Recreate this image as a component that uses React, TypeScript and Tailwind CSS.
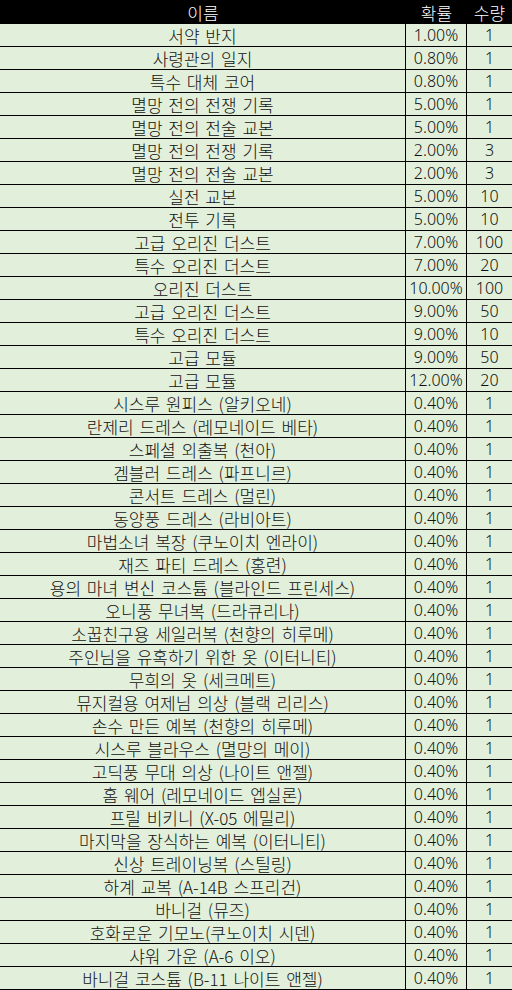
const rows: [string, string, string][] = [
  ["서약 반지", "1.00%", "1"],
  ["사령관의 일지", "0.80%", "1"],
  ["특수 대체 코어", "0.80%", "1"],
  ["멸망 전의 전쟁 기록", "5.00%", "1"],
  ["멸망 전의 전술 교본", "5.00%", "1"],
  ["멸망 전의 전쟁 기록", "2.00%", "3"],
  ["멸망 전의 전술 교본", "2.00%", "3"],
  ["실전 교본", "5.00%", "10"],
  ["전투 기록", "5.00%", "10"],
  ["고급 오리진 더스트", "7.00%", "100"],
  ["특수 오리진 더스트", "7.00%", "20"],
  ["오리진 더스트", "10.00%", "100"],
  ["고급 오리진 더스트", "9.00%", "50"],
  ["특수 오리진 더스트", "9.00%", "10"],
  ["고급 모듈", "9.00%", "50"],
  ["고급 모듈", "12.00%", "20"],
  ["시스루 원피스 (알키오네)", "0.40%", "1"],
  ["란제리 드레스 (레모네이드 베타)", "0.40%", "1"],
  ["스페셜 외출복 (천아)", "0.40%", "1"],
  ["겜블러 드레스 (파프니르)", "0.40%", "1"],
  ["콘서트 드레스 (멀린)", "0.40%", "1"],
  ["동양풍 드레스 (라비아트)", "0.40%", "1"],
  ["마법소녀 복장 (쿠노이치 엔라이)", "0.40%", "1"],
  ["재즈 파티 드레스 (홍련)", "0.40%", "1"],
  ["용의 마녀 변신 코스튬 (블라인드 프린세스)", "0.40%", "1"],
  ["오니풍 무녀복 (드라큐리나)", "0.40%", "1"],
  ["소꿉친구용 세일러복 (천향의 히루메)", "0.40%", "1"],
  ["주인님을 유혹하기 위한 옷 (이터니티)", "0.40%", "1"],
  ["무희의 옷 (세크메트)", "0.40%", "1"],
  ["뮤지컬용 여제님 의상 (블랙 리리스)", "0.40%", "1"],
  ["손수 만든 예복 (천향의 히루메)", "0.40%", "1"],
  ["시스루 블라우스 (멸망의 메이)", "0.40%", "1"],
  ["고딕풍 무대 의상 (나이트 앤젤)", "0.40%", "1"],
  ["홈 웨어 (레모네이드 엡실론)", "0.40%", "1"],
  ["프릴 비키니 (X-05 에밀리)", "0.40%", "1"],
  ["마지막을 장식하는 예복 (이터니티)", "0.40%", "1"],
  ["신상 트레이닝복 (스틸링)", "0.40%", "1"],
  ["하계 교복 (A-14B 스프리건)", "0.40%", "1"],
  ["바니걸 (뮤즈)", "0.40%", "1"],
  ["호화로운 기모노(쿠노이치 시덴)", "0.40%", "1"],
  ["샤워 가운 (A-6 이오)", "0.40%", "1"],
  ["바니걸 코스튬 (B-11 나이트 앤젤)", "0.40%", "1"],
];

const cjk = { fontFamily: '"Noto Sans CJK KR", "Noto Sans", sans-serif' };
const num = { fontFamily: '"Noto Sans", "Noto Sans CJK KR", sans-serif' };

const App = () => {
  return (
    <div className="w-[512px] bg-white leading-none text-[#111]">
      {/* header */}
      <div
        className="grid h-[24px] grid-cols-[406px_61px_45px] bg-black text-[17px] font-light text-white [word-spacing:2px]"
        style={cjk}
      >
        <div className="flex items-center justify-center">이름</div>
        <div className="flex items-center justify-center">확률</div>
        <div className="flex items-center justify-center">수량</div>
      </div>

      {rows.map((row, i) => (
        <div
          key={i}
          className="grid h-[23px] grid-cols-[406px_61px_45px] border-b border-black bg-[#e2efda]"
        >
          <div
            className="flex items-center justify-center whitespace-nowrap border-r border-black text-[17px] font-light [word-spacing:2px]"
            style={cjk}
          >
            {row[0]}
          </div>
          <div
            className="flex items-center justify-center border-r border-black text-[16px] font-light"
            style={num}
          >
            {row[1]}
          </div>
          <div className="flex items-center justify-center text-[16px] font-light" style={num}>
            {row[2]}
          </div>
        </div>
      ))}
    </div>
  );
};

export default App;
